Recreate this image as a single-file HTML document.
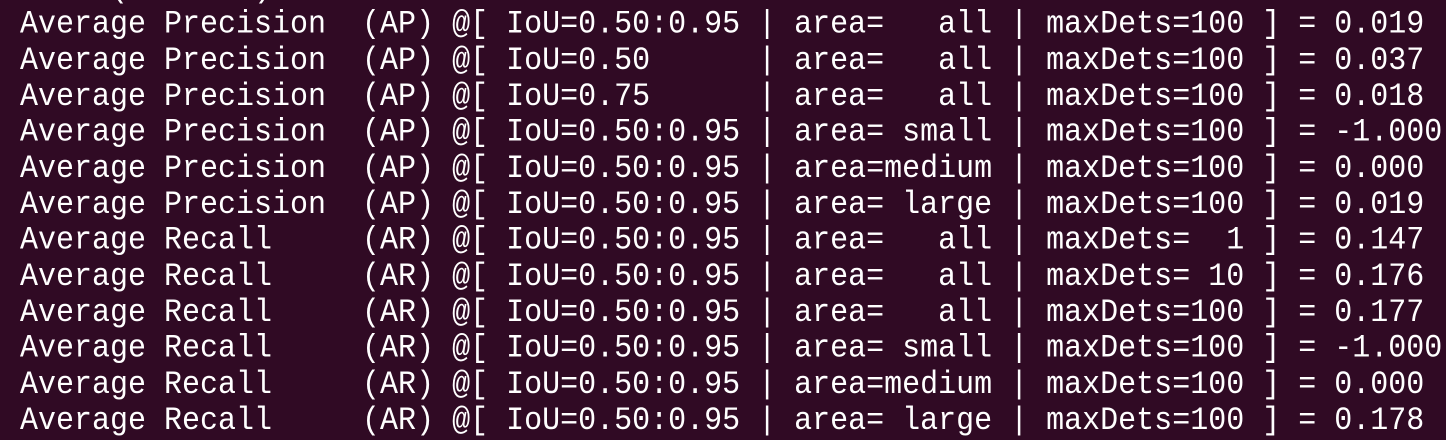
<!DOCTYPE html>
<html><head><style>
html,body{margin:0;padding:0;background:#300a24;width:1446px;height:436px;overflow:hidden}
pre{margin:0;position:absolute;left:20px;top:-28px;font-family:"Liberation Mono",monospace;font-size:30px;line-height:33.333px;color:#fff;transform:scaleY(1.08);transform-origin:0 0;white-space:pre}
</style></head><body><pre>DONE (t=0.45s).
Average Precision  (AP) @[ IoU=0.50:0.95 | area=   all | maxDets=100 ] = 0.019
Average Precision  (AP) @[ IoU=0.50      | area=   all | maxDets=100 ] = 0.037
Average Precision  (AP) @[ IoU=0.75      | area=   all | maxDets=100 ] = 0.018
Average Precision  (AP) @[ IoU=0.50:0.95 | area= small | maxDets=100 ] = -1.000
Average Precision  (AP) @[ IoU=0.50:0.95 | area=medium | maxDets=100 ] = 0.000
Average Precision  (AP) @[ IoU=0.50:0.95 | area= large | maxDets=100 ] = 0.019
Average Recall     (AR) @[ IoU=0.50:0.95 | area=   all | maxDets=  1 ] = 0.147
Average Recall     (AR) @[ IoU=0.50:0.95 | area=   all | maxDets= 10 ] = 0.176
Average Recall     (AR) @[ IoU=0.50:0.95 | area=   all | maxDets=100 ] = 0.177
Average Recall     (AR) @[ IoU=0.50:0.95 | area= small | maxDets=100 ] = -1.000
Average Recall     (AR) @[ IoU=0.50:0.95 | area=medium | maxDets=100 ] = 0.000
Average Recall     (AR) @[ IoU=0.50:0.95 | area= large | maxDets=100 ] = 0.178</pre></body></html>
